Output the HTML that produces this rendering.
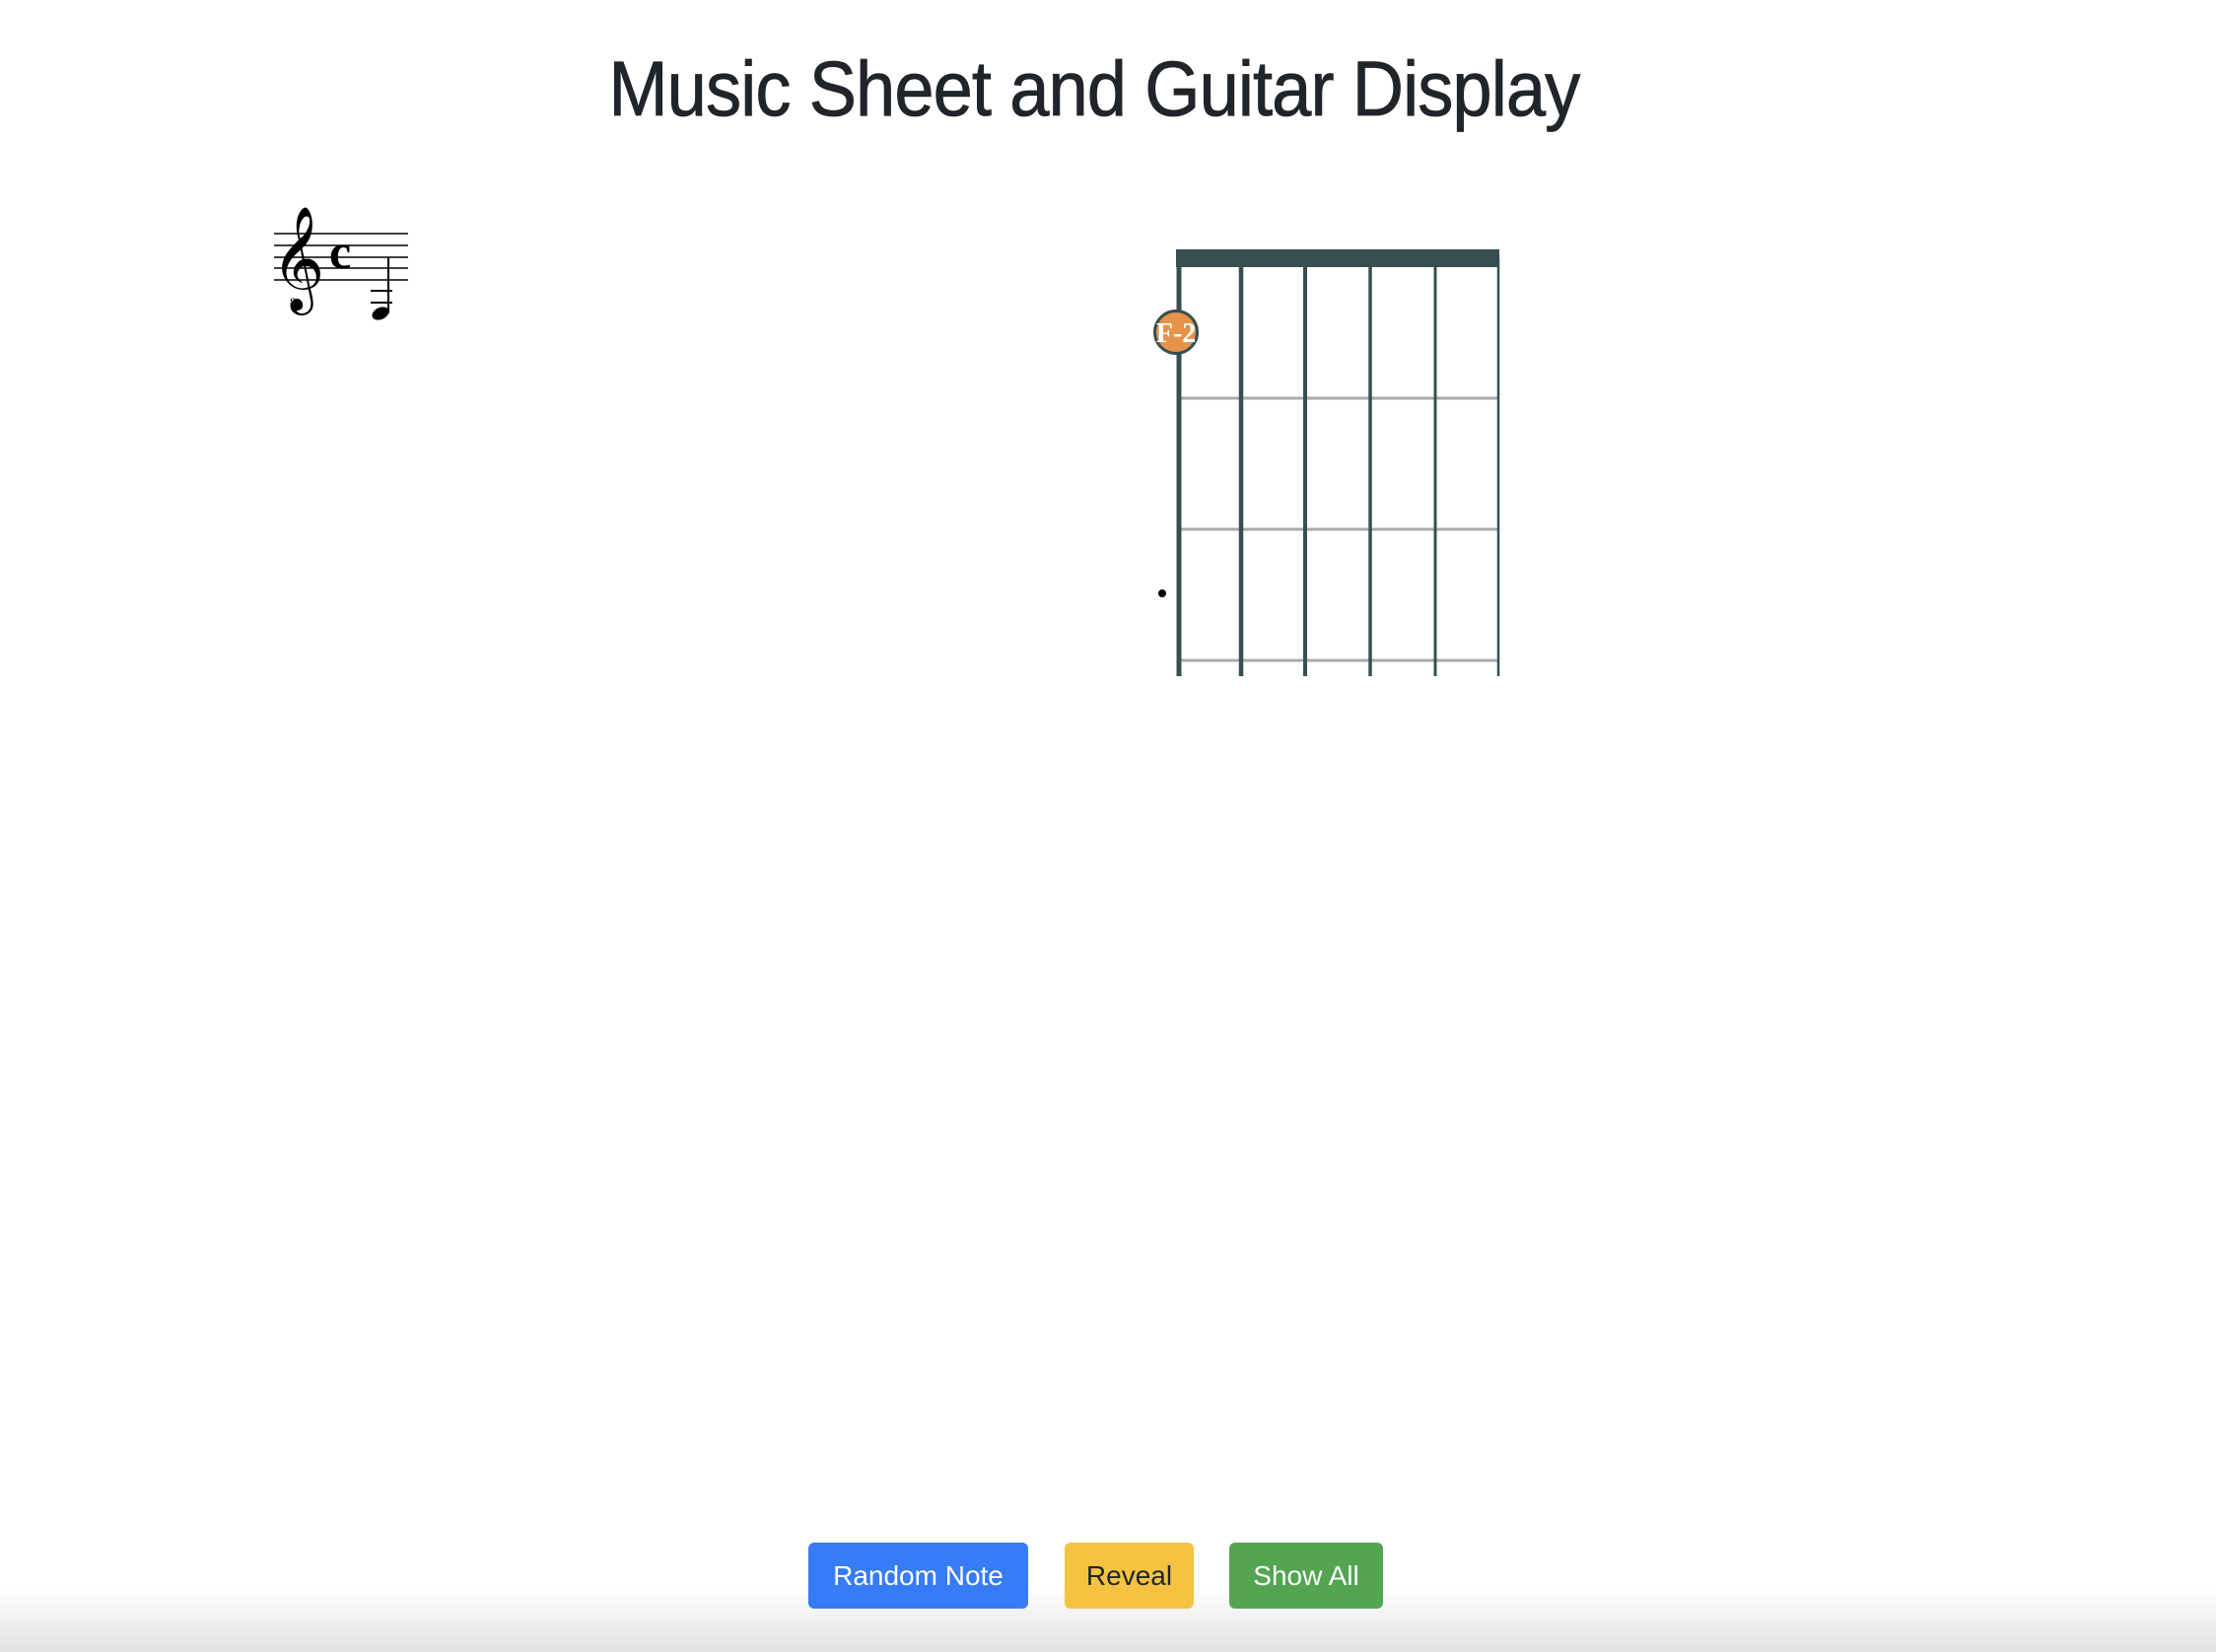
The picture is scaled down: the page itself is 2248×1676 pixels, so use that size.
<!DOCTYPE html>
<html><head><meta charset="utf-8"><style>
html,body{margin:0;padding:0;width:2248px;height:1676px;overflow:hidden;background:#fff;position:relative;font-family:"Liberation Sans",sans-serif}
h1{position:absolute;left:-13px;width:2248px;top:44px;margin:0;text-align:center;font-size:79px;font-weight:normal;color:#212529;letter-spacing:-1px;-webkit-text-stroke:0.8px #212529;transform:scaleX(0.915);transform-origin:1111px 0}
.btn{position:absolute;top:1565px;height:67px;border-radius:6px;font-size:28px;line-height:67px;text-align:center;color:#fff}
.fade{position:absolute;left:0;top:1610px;width:2248px;height:66px;background:linear-gradient(#fff,#e2e2e2)}
</style></head><body>
<div class="fade"></div>
<h1>Music Sheet and Guitar Display</h1>
<svg width="2248" height="1676" style="position:absolute;left:0;top:0">
<g stroke="#000" stroke-width="1.4">
<line x1="278" y1="237" x2="414" y2="237"/><line x1="278" y1="249" x2="414" y2="249"/><line x1="278" y1="261" x2="414" y2="261"/><line x1="278" y1="272" x2="414" y2="272"/><line x1="278" y1="284" x2="414" y2="284"/>
<line x1="376" y1="295" x2="398" y2="295" stroke-width="2"/><line x1="376" y1="307" x2="398" y2="307" stroke-width="2"/>
<line x1="394" y1="261" x2="394" y2="318" stroke-width="2"/>
</g>
<ellipse cx="386" cy="318" rx="9" ry="6" transform="rotate(-25 386 318)" fill="#000"/>
<text x="275" y="293" font-family="DejaVu Sans" font-size="92" fill="#000">𝄞</text>
<text x="294" y="311" font-family="Liberation Serif" font-size="13" fill="#000">8</text>
<text x="334" y="272" font-family="Liberation Serif" font-weight="bold" font-size="50" fill="#000">c</text>
<rect x="1193" y="253" width="328" height="18" fill="#374f51"/>
<g stroke="#aaa" stroke-width="3"><line x1="1196" y1="404" x2="1520" y2="404"/><line x1="1196" y1="537" x2="1520" y2="537"/><line x1="1196" y1="670" x2="1520" y2="670"/></g>
<g stroke="#374f51"><line x1="1196" y1="262" x2="1196" y2="686" stroke-width="5"/><line x1="1259" y1="262" x2="1259" y2="686" stroke-width="4.5"/><line x1="1324" y1="262" x2="1324" y2="686" stroke-width="4"/><line x1="1390" y1="262" x2="1390" y2="686" stroke-width="3.5"/><line x1="1456" y1="262" x2="1456" y2="686" stroke-width="3"/><line x1="1520" y1="262" x2="1520" y2="686" stroke-width="2.5"/></g>
<circle cx="1179" cy="602" r="4" fill="#000"/>
<circle cx="1193" cy="337" r="21.5" fill="#e5944a" stroke="#374f51" stroke-width="3"/>
<text x="1193" y="347" text-anchor="middle" font-family="Liberation Serif" font-weight="bold" font-size="28" fill="#fff">F-2</text>
</svg>
<div class="btn" style="left:820px;width:223px;background:#377bf6">Random Note</div>
<div class="btn" style="left:1080px;width:131px;background:#f5c242;color:#212529">Reveal</div>
<div class="btn" style="left:1247px;width:156px;background:#53a551">Show All</div>
</body></html>
